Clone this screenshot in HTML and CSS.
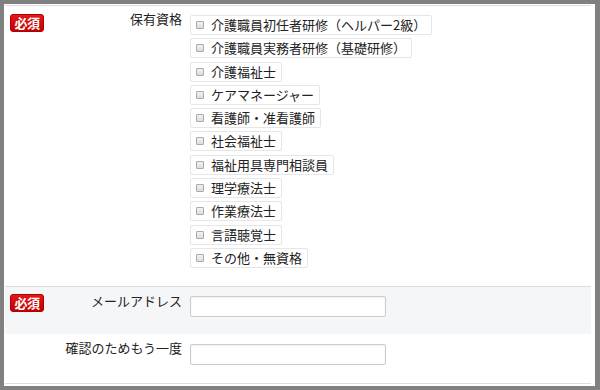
FILE: index.html
```html
<!DOCTYPE html>
<html lang="ja">
<head>
  <meta charset="UTF-8" />
  <meta name="viewport" content="width=device-width, initial-scale=1.0"/>
  <title>登録フォーム</title>
  <link rel="stylesheet" href="styles.css">
</head>
<body>

<div class="panel">
  <table class="form-table">
    <tr class="row-license">
      <th>
        <div class="th-inner">
          <span class="req">必須</span>
          <span class="th-label">保有資格</span>
        </div>
      </th>
      <td>
        <ul class="check-list">
          <li><label class="check-item"><span class="box"></span>介護職員初任者研修（ヘルパー2級）</label></li>
          <li><label class="check-item"><span class="box"></span>介護職員実務者研修（基礎研修）</label></li>
          <li><label class="check-item"><span class="box"></span>介護福祉士</label></li>
          <li><label class="check-item"><span class="box"></span>ケアマネージャー</label></li>
          <li><label class="check-item"><span class="box"></span>看護師・准看護師</label></li>
          <li><label class="check-item"><span class="box"></span>社会福祉士</label></li>
          <li><label class="check-item"><span class="box"></span>福祉用具専門相談員</label></li>
          <li><label class="check-item"><span class="box"></span>理学療法士</label></li>
          <li><label class="check-item"><span class="box"></span>作業療法士</label></li>
          <li><label class="check-item"><span class="box"></span>言語聴覚士</label></li>
          <li><label class="check-item"><span class="box"></span>その他・無資格</label></li>
        </ul>
      </td>
    </tr>
    <tr class="row-mail">
      <th>
        <div class="th-inner">
          <span class="req">必須</span>
          <span class="th-label">メールアドレス</span>
        </div>
      </th>
      <td><input type="text" class="text-input"></td>
    </tr>
    <tr class="row-confirm">
      <th>
        <div class="th-inner">
          <span class="th-label">確認のためもう一度</span>
        </div>
      </th>
      <td><input type="text" class="text-input"></td>
    </tr>
  </table>
</div>

</body>
</html>
```

FILE: styles.css
```css
* {
  box-sizing: border-box;
}
body {
  margin: 0;
  background: #808080;
  color: #333;
  font-family: "Noto Sans CJK JP", sans-serif;
  font-size: 13px;
}
.panel {
  margin: 4px 0 0 4px;
  width: 591px;
  height: 382px;
  padding: 1px 0 0 1px;
  background: #fff;
}
.form-table {
  width: 586px;
  border-collapse: collapse;
}
.form-table th,
.form-table td {
  vertical-align: top;
  text-align: left;
  font-weight: normal;
}
.form-table th {
  width: 185px;
  padding: 7px 8px 0 5px;
}
.form-table td {
  padding: 9px 0 17px 0;
}
.row-license th,
.row-license td {
  border-top: 1px solid #ddd;
}
.row-license th {
  padding-top: 8px;
}
.row-license td {
  padding-bottom: 18px;
}
.row-mail th,
.row-mail td {
  border-top: 1px solid #ddd;
  background: #f5f6f8;
}
.row-confirm th,
.row-confirm td {
  border-bottom: 1px solid #ddd;
}
.row-confirm td {
  padding: 10px 0 18px 0;
}
.th-inner {
  display: flex;
  justify-content: space-between;
  align-items: flex-start;
}
.th-label {
  margin-left: auto;
  line-height: 14px;
  color: #222;
}
.row-license .th-label {
  margin-top: -2px;
}
.req {
  display: inline-block;
  width: 34px;
  height: 18px;
  line-height: 16px;
  text-align: center;
  font-size: 13px;
  font-weight: bold;
  letter-spacing: -0.5px;
  color: #fff;
  background: linear-gradient(#e01818, #c40000);
  border: 1px solid #b00000;
  border-radius: 3px;
}
.check-list {
  list-style: none;
  margin: 0;
  padding: 0;
  display: flex;
  flex-direction: column;
  align-items: flex-start;
  gap: 3.3px;
}
.check-list li {
  display: flex;
}
.check-item {
  display: flex;
  align-items: center;
  gap: 7px;
  height: 20px;
  line-height: 18px;
  padding: 0 5px 0 5px;
  border: 1px solid #e6e6e6;
  border-radius: 2px;
  background: #fff;
  color: #222;
}
.box {
  width: 8px;
  height: 8px;
  border: 1px solid #aaa;
  border-radius: 1px;
  background: linear-gradient(#f2f2f2, #dcdcdc);
}
.text-input {
  display: block;
  width: 196px;
  height: 21px;
  margin: 0;
  border: 1px solid #ccc;
  border-radius: 2px;
  background: #fff;
  box-shadow: inset 0 1px 2px rgba(0,0,0,0.08);
}
```
